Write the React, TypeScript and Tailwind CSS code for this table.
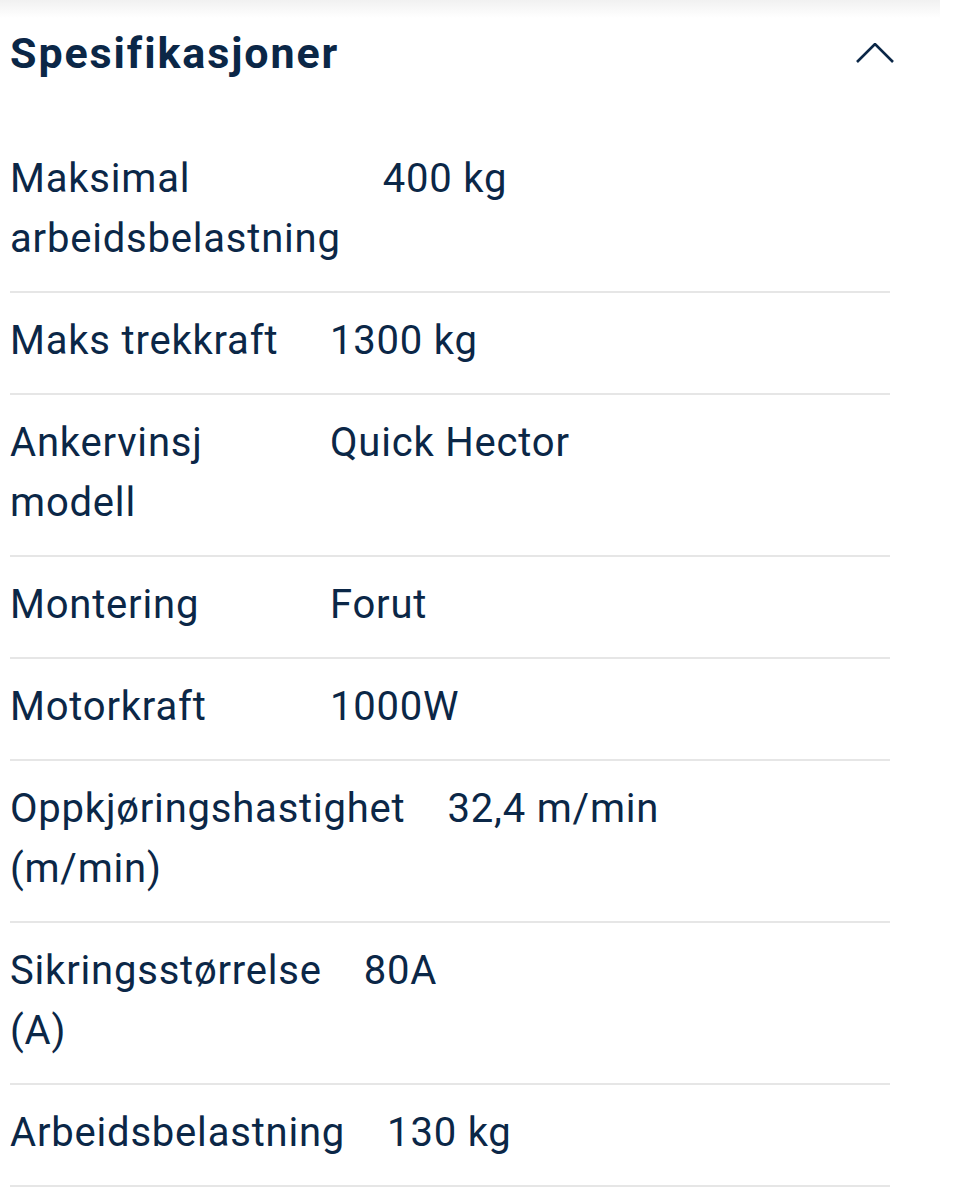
const specs: { label: string; value: string }[] = [
  { label: "Maksimal arbeidsbelastning", value: "400 kg" },
  { label: "Maks trekkraft", value: "1300 kg" },
  { label: "Ankervinsj modell", value: "Quick Hector" },
  { label: "Montering", value: "Forut" },
  { label: "Motorkraft", value: "1000W" },
  { label: "Oppkjøringshastighet (m/min)", value: "32,4 m/min" },
  { label: "Sikringsstørrelse (A)", value: "80A" },
  { label: "Arbeidsbelastning", value: "130 kg" },
];

function ChevronUp() {
  return (
    <svg width="38" height="20" viewBox="0 0 38 20" fill="none">
      <polyline
        points="1,19 19,1 37,19"
        stroke="#0b2747"
        strokeWidth="2.6"
        strokeLinejoin="miter"
      />
    </svg>
  );
}

export default function App() {
  return (
    <div
      className="relative min-h-[1193px] w-[960px] bg-white text-[#0b2747]"
      style={{ fontFamily: "Roboto, 'Noto Sans', sans-serif" }}
    >
      {/* faint shadow from sticky bar above */}
      <div className="absolute left-0 top-0 h-[18px] w-[940px] bg-gradient-to-b from-[#f1f1f1] to-white" />

      <section className="relative px-[10px]">
        {/* Header */}
        <div className="flex h-[106px] items-center justify-between pr-[56px]">
          <h2 className="text-[43px] font-bold leading-none tracking-[1.9px]">
            Spesifikasjoner
          </h2>
          <ChevronUp />
        </div>

        {/* Spec rows */}
        <div className="mt-[25px] w-[880px]">
          {specs.map((s) => (
            <div
              key={s.label}
              className="flex items-start border-b-2 border-[#e6e6e6] pt-[18px] pb-[22px] text-[40px] leading-[60px] tracking-[0.8px]"
            >
              <div className="shrink-0 pr-[42px]">
                <div className="w-[278px] min-w-min">{s.label}</div>
              </div>
              <div>{s.value}</div>
            </div>
          ))}
        </div>
      </section>
    </div>
  );
}
